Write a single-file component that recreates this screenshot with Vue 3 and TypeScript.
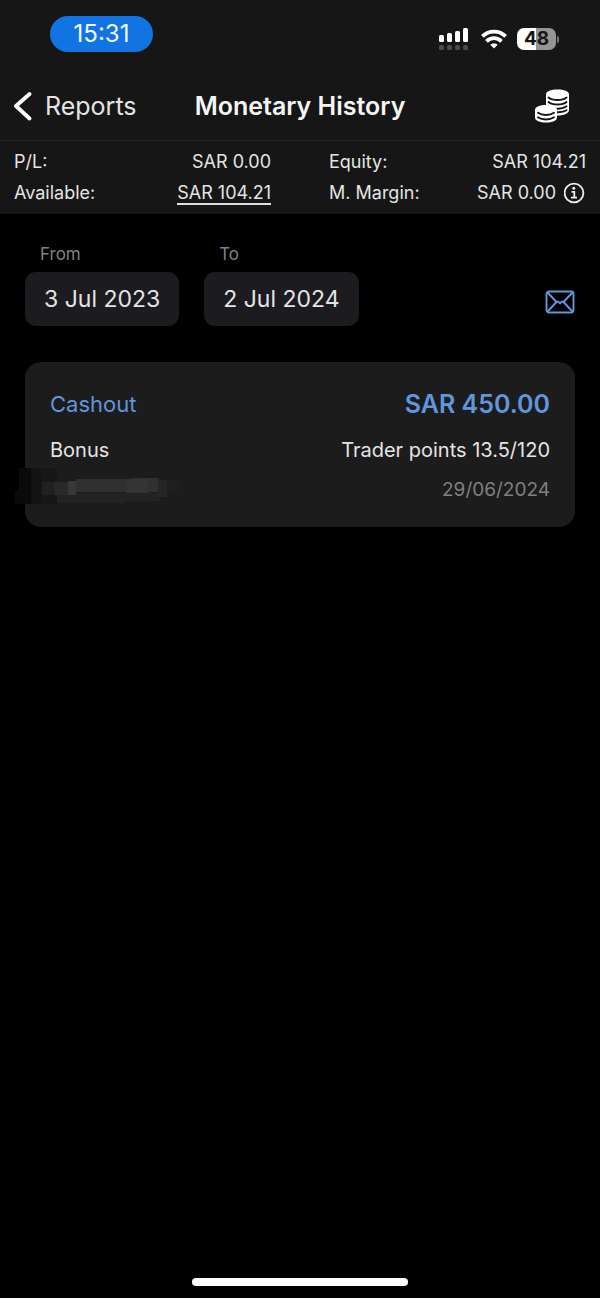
<script setup lang="ts">
interface Balance {
  label: string
  value: string
  underlined?: boolean
  info?: boolean
}

interface DateField {
  id: string
  label: string
  value: string
}

interface Entry {
  type: string
  amount: string
  category: string
  detail: string
  date: string
}

const balances: Balance[] = [
  { label: 'P/L:', value: 'SAR 0.00' },
  { label: 'Equity:', value: 'SAR 104.21' },
  { label: 'Available:', value: 'SAR 104.21', underlined: true },
  { label: 'M. Margin:', value: 'SAR 0.00', info: true },
]

const dates: DateField[] = [
  { id: 'from', label: 'From', value: '3 Jul 2023' },
  { id: 'to', label: 'To', value: '2 Jul 2024' },
]

const entries: Entry[] = [
  {
    type: 'Cashout',
    amount: 'SAR 450.00',
    category: 'Bonus',
    detail: 'Trader points 13.5/120',
    date: '29/06/2024',
  },
]
</script>

<template>
  <div class="screen">
    <header class="top">
      <div class="status">
        <span class="clock">15:31</span>
        <div class="indicators">
          <svg class="signal" width="32" height="22" viewBox="0 0 32 22" aria-hidden="true">
            <g fill="#fff">
              <rect x="0" y="7" width="5" height="7" rx="1.5" />
              <rect x="8" y="5" width="5" height="9" rx="1.5" />
              <rect x="16" y="3" width="5" height="11" rx="1.5" />
              <rect x="24" y="0" width="5" height="14" rx="1.5" />
            </g>
            <g fill="#4c4c4c">
              <rect x="0" y="17" width="5" height="5" rx="1.5" />
              <rect x="8" y="17" width="5" height="5" rx="1.5" />
              <rect x="16" y="17" width="5" height="5" rx="1.5" />
              <rect x="24" y="17" width="5" height="5" rx="1.5" />
            </g>
          </svg>
          <svg class="wifi" width="26" height="20" viewBox="0 0 26 20" aria-hidden="true">
            <g fill="none" stroke="#fff" stroke-width="3.8">
              <path d="M1.4 7.4a16.4 16.4 0 0 1 23.2 0" />
              <path d="M5.5 12.3a10.5 10.5 0 0 1 15 0" />
            </g>
            <path d="M13 19.6l-3.7-3.9a5.3 5.3 0 0 1 7.4 0z" fill="#fff" />
          </svg>
          <span class="battery"><span class="level">48</span></span>
        </div>
      </div>

      <nav class="nav">
        <a class="back" href="#reports">
          <svg width="19" height="30" viewBox="0 0 19 30" aria-hidden="true">
            <path d="M16.5 3L3 15L16.5 27.500" fill="none" stroke="#fff" stroke-width="3.800" stroke-linecap="round" stroke-linejoin="round" />
          </svg>
          <span>Reports</span>
        </a>
        <h1 class="title">Monetary History</h1>
        <button class="icon-button coins" type="button" aria-label="Funds">
          <svg width="36" height="36" viewBox="0 0 36 36" aria-hidden="true">
            <path d="M12 6.500C12 3.200 17 1.500 23.500 1.500S35 3.200 35 6.500V22c0 3.400-5 5.500-11.500 5.500S12 25.400 12 22z" fill="#fff" />
            <g fill="none" stroke="#161616" stroke-width="1.900" stroke-linecap="round">
              <path d="M14.500 9.500c4 3.400 14 3.400 18 0" />
              <path d="M14.500 14c4 3.400 14 3.400 18 0" />
              <path d="M18 19.800c5 1.400 11 .9 14.500-1.500" />
              <path d="M23 24.200c4 .2 7.500-.5 9.500-1.900" />
            </g>
            <path d="M1 22c0-3.200 5-5 11-5s11 1.800 11 5v7.500c0 3.200-5 5-11 5s-11-1.800-11-5z" fill="#fff" />
            <g fill="none" stroke="#161616" stroke-width="1.900" stroke-linecap="round">
              <path d="M4 24.800c4 2.900 12 2.900 16 0" />
              <path d="M4 29.300c4 2.900 12 2.900 16 0" />
            </g>
          </svg>
        </button>
      </nav>
    </header>

    <dl class="balances">
      <div v-for="item in balances" :key="item.label" class="balance">
        <dt>{{ item.label }}</dt>
        <dd>
          <a v-if="item.underlined" class="available" href="#available">{{ item.value }}</a>
          <span v-else>{{ item.value }}</span>
          <button v-if="item.info" class="icon-button" type="button" aria-label="Margin information">
            <svg width="22" height="22" viewBox="0 0 22 22" aria-hidden="true">
              <circle cx="10" cy="11" r="9.400" fill="none" stroke="#ededed" stroke-width="1.800" />
              <circle cx="9.800" cy="6.300" r="1.500" fill="#ededed" />
              <path d="M7.500 9.800h2.800v5.700M7 15.700h6" fill="none" stroke="#ededed" stroke-width="1.800" />
            </svg>
          </button>
        </dd>
      </div>
    </dl>

    <main class="content">
      <div class="filters">
        <div v-for="field in dates" :key="field.id" class="field">
          <label :for="field.id">{{ field.label }}</label>
          <button :id="field.id" class="date" type="button">{{ field.value }}</button>
        </div>
        <button class="icon-button mail" type="button" aria-label="Send by email">
          <svg width="30" height="24" viewBox="0 0 30 24" aria-hidden="true">
            <g fill="none" stroke="#5f96dc" stroke-width="1.900" stroke-linejoin="round">
              <rect x="1.500" y="1.500" width="27" height="21" rx="2.500" />
              <path d="M2.500 2.500L11.500 12l1.800-.5 1.700 2 1.700-2 1.800.5L27.500 2.500" />
              <path d="M2.500 21.500l9-9.500M27.500 21.500l-9-9.500" />
            </g>
          </svg>
        </button>
      </div>

      <article v-for="entry in entries" :key="entry.date" class="card">
        <div class="row heading">
          <span>{{ entry.type }}</span>
          <strong>{{ entry.amount }}</strong>
        </div>
        <div class="row detail">
          <span>{{ entry.category }}</span>
          <span>{{ entry.detail }}</span>
        </div>
        <div class="row date-row">
          <time>{{ entry.date }}</time>
        </div>
        <svg class="smudge" width="172" height="38" viewBox="0 0 172 38" aria-hidden="true">
          <path d="M6 1h22v36H2V24h4z" fill="#0a0a0a" />
          <path d="M18 1h22v36H18z" fill="#131313" />
          <path d="M28 1h16v36H28z" fill="#171717" />
          <path d="M29 15h14v13H29z" fill="#202020" />
          <path d="M41 15h14v13H41z" fill="#292929" />
          <path d="M55 14h8v14h-8z" fill="#383838" />
          <path d="M63 12h55V11h28v14H63z" fill="#303030" />
          <path d="M113 12h22v14h-22z" fill="#343434" />
          <path d="M44 28h19v-2h83v8h-34v2H44z" fill="#232323" />
          <path d="M145 13h9v17h-9z" fill="#262626" />
          <path d="M154 14h14v12h-14z" fill="#1e1e1e" />
        </svg>
      </article>
    </main>

    <div class="home-bar"></div>
  </div>
</template>

<style>
body {
  margin: 0;
  background: #000;
}
</style>

<style scoped>
.screen {
  display: flex;
  flex-direction: column;
  min-height: 100vh;
  background: #000;
  color: #e4e4e4;
  font-family: Inter, "Liberation Sans", sans-serif;
}

button {
  font: inherit;
  color: inherit;
  border: 0;
}

a {
  color: inherit;
  text-decoration: none;
}

.icon-button {
  display: flex;
  padding: 0;
  background: none;
}

.top {
  background: #161616;
  border-bottom: 1px solid #252525;
}

.status {
  display: flex;
  justify-content: space-between;
  align-items: flex-start;
  padding: 16px 41px 0 50px;
}

.clock {
  width: 103px;
  border-radius: 18px;
  background: #1273e2;
  color: #f4f9ff;
  font-size: 24px;
  line-height: 36px;
  text-align: center;
}

.indicators {
  display: flex;
  align-items: center;
  gap: 10px;
  padding-top: 12px;
}

.battery {
  display: flex;
  align-items: center;
}

.battery::after {
  content: "";
  width: 2px;
  height: 7px;
  margin-left: 1px;
  border-radius: 0 2px 2px 0;
  background: #777;
}

.level {
  width: 39px;
  border-radius: 7px;
  background: linear-gradient(90deg, #fff 48%, #949494 48%);
  color: #161616;
  font-size: 19px;
  font-weight: 700;
  line-height: 22px;
  text-align: center;
}

.nav {
  display: grid;
  grid-template-columns: 1fr auto 1fr;
  align-items: center;
  height: 68px;
  margin-top: 20px;
}

.back {
  display: flex;
  align-items: center;
  gap: 13px;
  padding-left: 13px;
  font-size: 25px;
  line-height: 32px;
}

.title {
  margin: 0;
  color: #f5f5f5;
  font-size: 25px;
  font-weight: 600;
  line-height: 32px;
}

.coins {
  justify-self: end;
  padding-right: 30px;
}

.balances {
  display: grid;
  grid-template-columns: 1fr 1fr;
  column-gap: 58px;
  margin: 0;
  padding: 5px 14px 6px;
  background: #161616;
  font-size: 18px;
}

.balance {
  display: flex;
  justify-content: space-between;
  align-items: center;
  height: 31px;
}

.balance dt {
  margin: 0;
}

.balance dd {
  display: flex;
  align-items: center;
  gap: 8px;
  margin: 0;
}

.available {
  padding-top: 2px;
  border-bottom: 2px solid #dedede;
  line-height: 20px;
}

.content {
  flex: 1;
  padding: 28px 25px 0;
}

.filters {
  display: flex;
  gap: 25px;
}

.field {
  display: flex;
  flex-direction: column;
  gap: 6px;
}

.field label {
  padding-left: 15px;
  color: #808080;
  font-size: 17px;
  line-height: 24px;
}

.date {
  height: 54px;
  padding: 0 19px;
  border-radius: 11px;
  background: #1c1c20;
  font-size: 23px;
}

.mail {
  align-self: flex-end;
  margin: 0 0 12px auto;
}

.card {
  position: relative;
  margin-top: 36px;
  padding: 24px 25px 17px;
  border-radius: 16px;
  background: #1c1c1c;
}

.row {
  display: flex;
  justify-content: space-between;
  align-items: center;
}

.heading {
  color: #5f96dc;
  font-size: 22px;
  line-height: 36px;
}

.heading strong {
  font-size: 25px;
  font-weight: 600;
}

.detail {
  margin-top: 8px;
  font-size: 20px;
  line-height: 40px;
}

.date-row {
  justify-content: flex-end;
  color: #808080;
  font-size: 19px;
  line-height: 40px;
}

.smudge {
  position: absolute;
  left: -12px;
  bottom: 22px;
}

.home-bar {
  width: 36%;
  height: 8px;
  margin: 0 auto 12px;
  border-radius: 4px;
  background: #fff;
}
</style>
